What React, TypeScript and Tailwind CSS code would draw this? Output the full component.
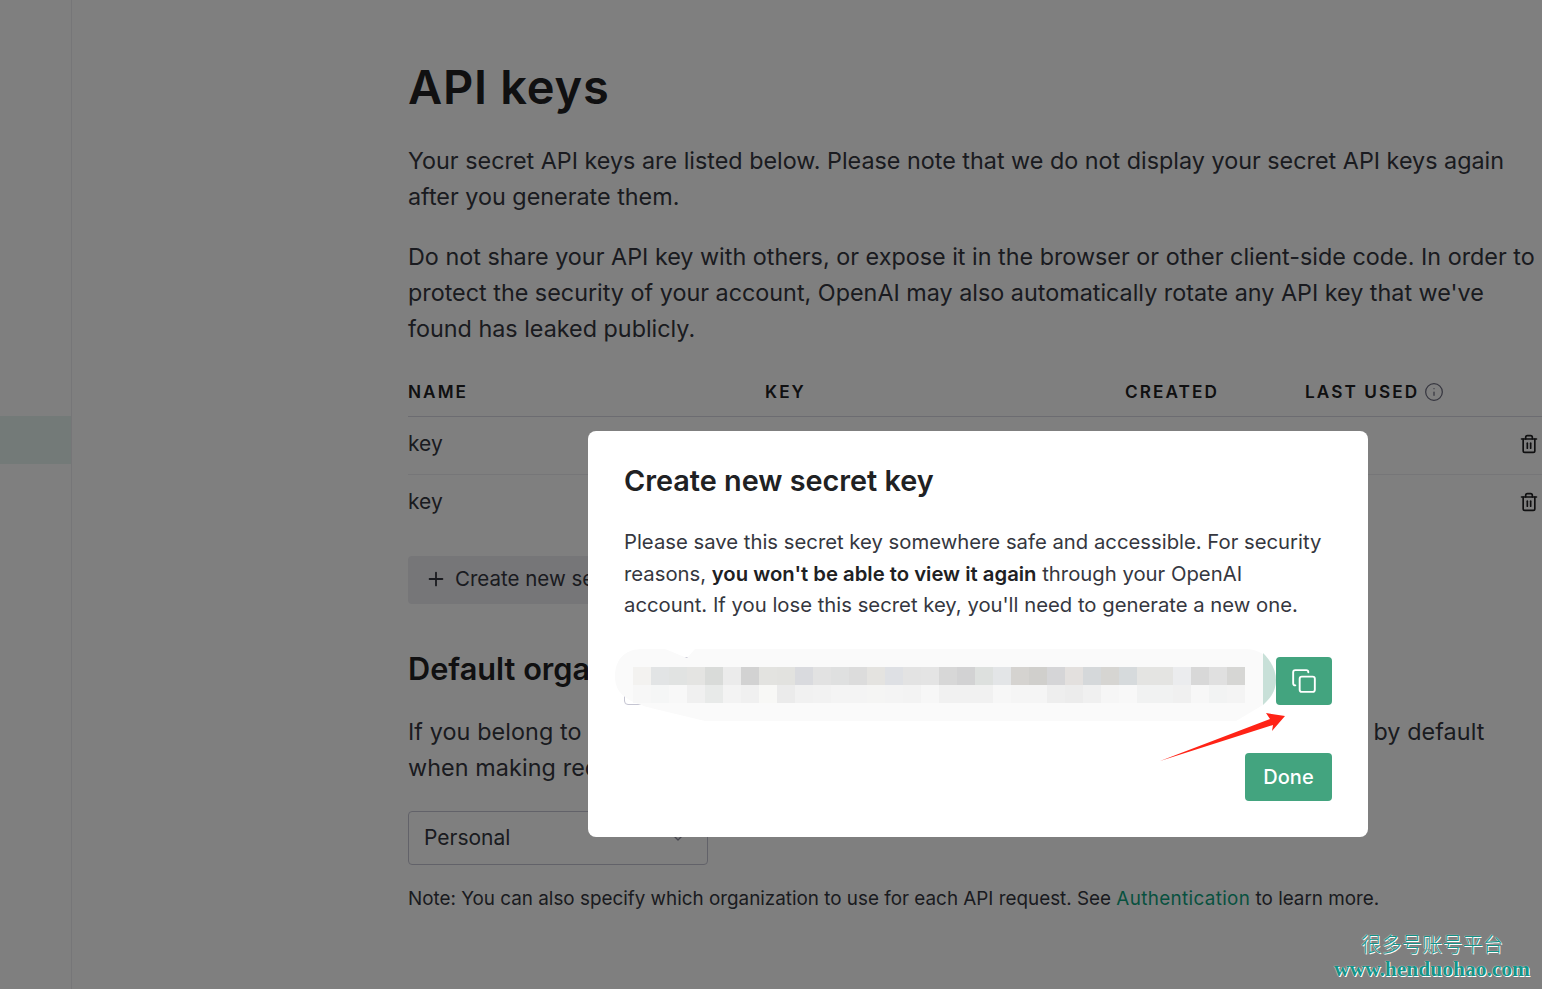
import { Copy, Info, Plus, ChevronDown, Trash2 } from "lucide-react";

const topRow = ["#f3f2f0","#e2e4e5","#e1e3e2","#e4e4e2","#d9dbd9","#ebebeb","#d2d2d2","#e3e3e0","#e2e2df","#d9dade","#e2e2e2","#dfe0e0","#dcdcdc","#e4e3e0","#dee0e4","#e3e3e3","#e4e4e4","#d7d7d7","#d2d2d3","#dde0de","#e3e5e7","#d5d3d0","#d0cfcc","#d5d5d7","#e3e0de","#d5d8da","#d6d5d2","#d6dadc","#e4e4e2","#e4e4e2","#ebecee","#d8d8d8","#e0e0e0","#d6d6d4"];
const bottomRow = ["#f7f7f7","#f5f6f6","#f8f8f8","#f0f0f0","#e8eae9","#f3f3f3","#f0f0f0","#f8f8f6","#ebebeb","#f1f1f1","#f2f2f2","#f4f4f4","#f4f4f4","#f5f5f4","#f4f4f4","#f3f3f3","#f7f7f7","#f1f1f1","#f1f1f1","#f1f1f1","#f7f7f7","#f5f5f5","#f5f5f5","#eeeeee","#ececec","#f0f0f0","#f6f6f6","#f8f8f8","#f1f2f2","#f1f2f2","#f0f0f0","#f7f7f7","#f2f3f3","#f4f4f4"];

const keyRows = ["key", "key"];

export default function App() {
  return (
    <div className="relative flex h-[989px] w-[1542px] overflow-hidden bg-white font-['Inter',sans-serif] text-[#353740]">
      {/* sidebar */}
      <div className="w-[72px] shrink-0 border-r border-[#ececf1] pt-[416px]">
        <div className="h-[48px] bg-[#e6f5f1]" />
      </div>

      {/* page content */}
      <div className="w-[1200px] shrink-0 pl-[336px] pt-[57px]">
        <h1 className="text-[47px] font-semibold leading-[60px] tracking-[0.75px] text-[#202123]">API keys</h1>
        <p className="mt-[26px] w-[1127px] text-[23.35px] leading-[36px]">
          Your secret API keys are listed below. Please note that we do not display your secret API keys again after you generate them.
        </p>
        <p className="mt-[24px] w-[1127px] text-[23.35px] leading-[36px]">
          Do not share your API key with others, or expose it in the browser or other client-side code. In order to protect the security of your account, OpenAI may also automatically rotate any API key that we've found has leaked publicly.
        </p>

        <div className="mt-[19px] w-[1134px]">
          <div className="flex h-[51px] items-center border-b border-[#d9d9e3] pt-[2px] text-[17.2px] font-semibold tracking-[0.12em] text-[#202123]">
            <span className="w-[357px]">NAME</span>
            <span className="w-[360px]">KEY</span>
            <span className="w-[180px]">CREATED</span>
            <span className="flex items-center gap-[5px]">
              LAST USED
              <Info className="h-[20px] w-[20px] text-[#6e6e80]" strokeWidth={1.5} />
            </span>
          </div>
          {keyRows.map((name, i) => (
            <div key={i} className="flex h-[58px] items-center justify-between border-b border-[#ececf1] pb-[3px] pr-[3px] text-[21px] last:border-b-0 last:pb-[4px]">
              <span>{name}</span>
              <Trash2 className="h-[20px] w-[20px] text-[#202123]" strokeWidth={2} />
            </div>
          ))}
        </div>

        <button className="mt-[23px] flex h-[48px] w-[300px] items-center gap-[8px] rounded-[4px] bg-[#ececf1] pb-[2px] pl-[17px] text-[20.5px]">
          <Plus className="h-[22px] w-[22px]" strokeWidth={2} />
          Create new secret key
        </button>

        <h2 className="mt-[45px] text-[30.7px] font-semibold leading-[40px] text-[#202123]">Default organizations</h2>
        <p className="mt-[25px] w-[1127px] text-[23.35px] leading-[36px] tracking-[0.09px]">
          If you belong to multiple organizations, this setting controls which organization is used by default when making requests with the API keys above.
        </p>
        <div className="mt-[25px] flex h-[54px] w-[300px] items-center justify-between rounded-[4px] border border-[#c5c5d2] pl-[15px] pr-[21px] text-[21px]">
          Personal
          <ChevronDown className="h-[16px] w-[16px] text-[#8e8ea0]" strokeWidth={2} />
        </div>
        <p className="mt-[22px] w-[1134px] text-[18.85px] leading-[24px] text-[#353740]">
          Note: You can also specify which organization to use for each API request. See <span className="tracking-[0.35px] text-[#10a37f]">Authentication</span> to learn more.
        </p>
      </div>

      {/* overlay + modal */}
      <div className="absolute inset-0 bg-black/50 pl-[588px] pt-[431px]">
        <div className="relative h-[406px] w-[780px] rounded-[8px] bg-white px-[36px] pt-[31px]">
          <h3 className="text-[28.8px] font-semibold leading-[38px] text-[#202123]">Create new secret key</h3>
          <p className="mt-[26px] w-[702px] text-[20.3px] leading-[31.5px]">
            Please save this secret key somewhere safe and accessible. For security reasons, <b className="font-semibold text-[#202123]">you won't be able to view it again</b> through your OpenAI account. If you lose this secret key, you'll need to generate a new one.
          </p>

          <div className="mt-[36.5px] flex h-[48px] justify-between">
            <div className="h-[48px] w-[630px] rounded-[4px] border border-[#c5c5d2]" />
            <button className="flex h-[48px] w-[56px] items-center justify-center rounded-[4px] bg-[#43a47f] text-white">
              <Copy className="h-[26px] w-[26px]" strokeWidth={1.75} />
            </button>
          </div>

          <div className="mt-[48px] flex justify-end">
            <button className="h-[48px] w-[87px] rounded-[4px] bg-[#43a47f] pb-[1px] text-[20px] font-medium text-white">Done</button>
          </div>

          {/* smudge over the key */}
          <svg className="absolute left-[27px] top-[218px]" width="664" height="72" viewBox="0 0 664 72">
            <path d="M0 28 C0 8 12 0 28 0 H50 L72 9 L80 0 H630 C650 0 661 15 661 31 C661 42 655 50 648 56 L621 72 L90 72 L40 60 C15 54 0 46 0 28 Z" fill="#fafafa" />
            <path d="M648 4 C656 12 661 21 661 31 C661 42 655 50 648 56 Z" fill="#c8e0d8" />
          </svg>
          <div className="absolute left-[45px] top-[236px] w-[612px]">
            <div className="flex">
              {topRow.map((c, i) => (
                <div key={i} className="h-[18px] w-[18px]" style={{ backgroundColor: c }} />
              ))}
            </div>
            <div className="flex">
              {bottomRow.map((c, i) => (
                <div key={i} className="h-[18px] w-[18px]" style={{ backgroundColor: c }} />
              ))}
            </div>
          </div>
        </div>
      </div>

      {/* red arrow annotation */}
      <svg className="absolute left-[1155px] top-[708px]" width="135" height="58" viewBox="1155 708 135 58">
        <polygon points="1160,761 1270,719 1266,713 1285,716 1272,731 1273,725" fill="#ff2316" />
      </svg>

      {/* watermark */}
      <div className="absolute bottom-[8px] right-[12px] flex flex-col items-center text-[#159488] [text-shadow:0_0_1px_#fff,1px_1px_0_#fff]">
        <span className="font-['Noto_Sans_CJK_SC',sans-serif] text-[20.3px] font-light leading-[28px]">很多号账号平台</span>
        <span className="font-['Liberation_Serif',serif] text-[21.5px] font-bold leading-[24px]">www.henduohao.com</span>
      </div>
    </div>
  );
}
